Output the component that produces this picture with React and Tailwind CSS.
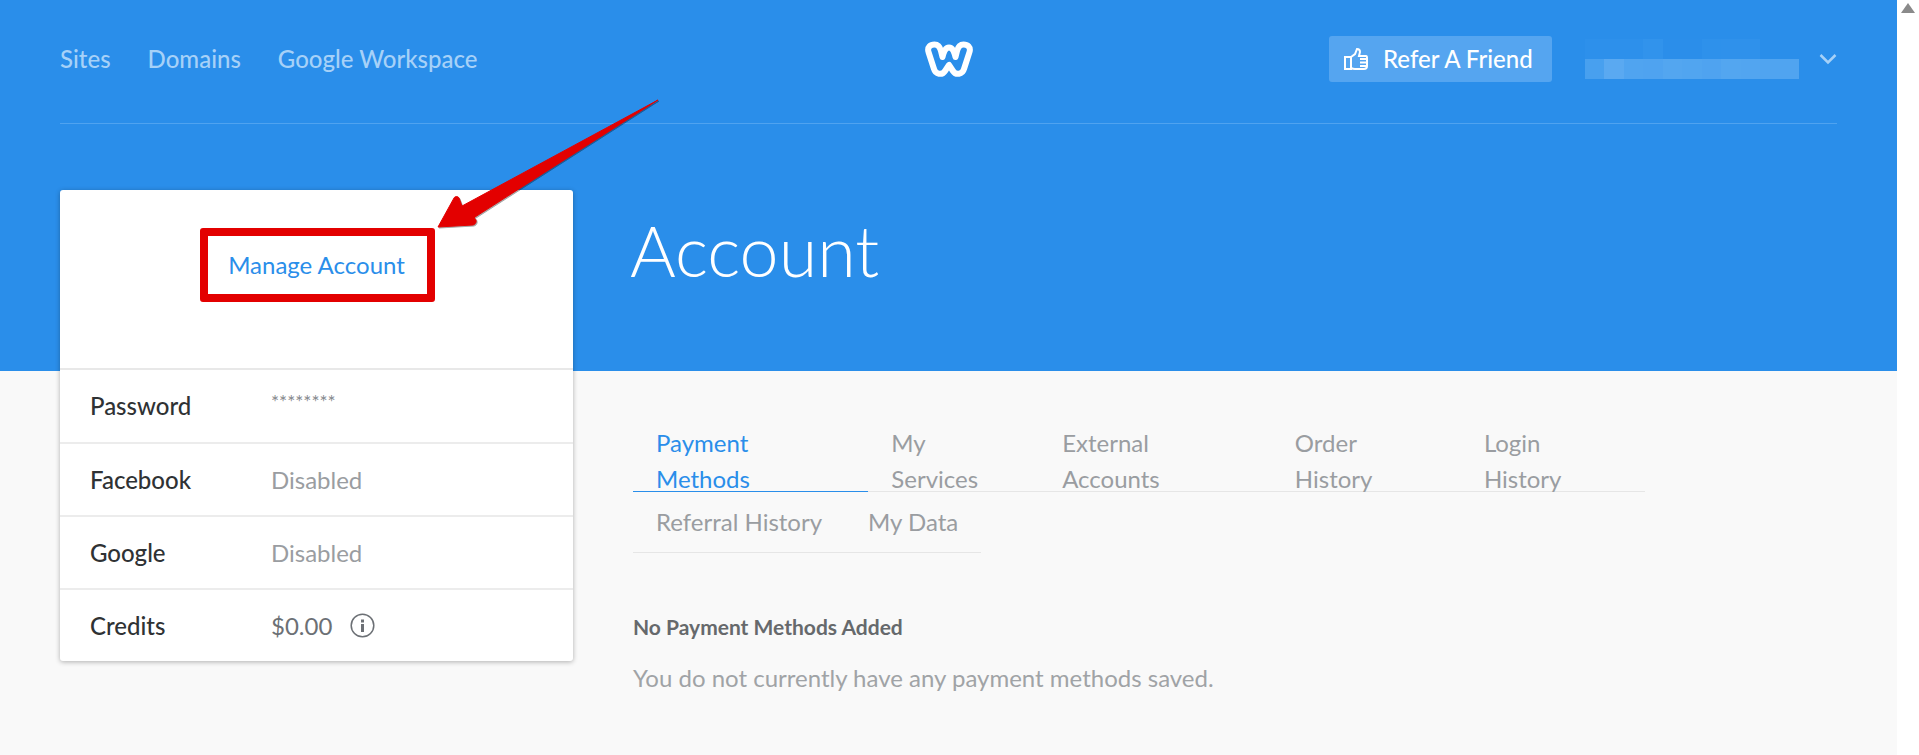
const tabsTop = [
  { label: 'Payment Methods', active: true },
  { label: 'My Services' },
  { label: 'External Accounts' },
  { label: 'Order History' },
  { label: 'Login History' },
];
const tabsBottom = [{ label: 'Referral History' }, { label: 'My Data' }];

const blocksTop = ['#2d90eb', '#2d90eb', '#2d90eb', '#3193ec', '#2b8eea', '#2b8eea', '#2e91eb', '#2f91eb', '#2f91eb', '#2a8eea', '#2a8eea'];
const blocksBottom = ['#48a0ef', '#5aa9f1', '#50a4f0', '#4fa3f0', '#53a6f0', '#51a5f0', '#4fa3f0', '#53a6f0', '#52a5f0', '#50a4f0', '#50a4f0'];

function Tab({ label, active }) {
  return (
    <a className={`px-[23px] h-[61px] flex items-center border-b-[1.5px] text-[24px] ${active ? 'text-[#2a8eea] border-[#2a8eea]' : 'text-[#9a9da1] border-[#e6e6e6]'}`}>
      {label}
    </a>
  );
}

function Row({ label, children, divided }) {
  return (
    <div className={`flex items-center pl-[30px] ${divided ? 'h-[73px] border-t-2 border-[#ececec]' : 'h-[72px]'}`}>
      <div className="w-[181px] text-[24px] font-medium text-[#2f3234]">{label}</div>
      <div className="flex items-center text-[24px] text-[#9a9da1]">{children}</div>
    </div>
  );
}

export default function App() {
  return (
    <div className="h-[755px] overflow-hidden flex font-['Lato',sans-serif] bg-white">
      <div className="relative flex-1 min-w-0 bg-[#f9f9f9]">
        <header className="h-[371px] bg-[#2a8eea] px-[60px]">
          <div className="relative h-[124px] pb-[5px] flex items-center justify-between border-b-[1.5px] border-[#4fa3f0]">
            <nav className="flex gap-[37px] text-[24px] font-medium text-[#a6d1f8]">
              <a>Sites</a>
              <a>Domains</a>
              <a>Google Workspace</a>
            </nav>
            <svg className="absolute left-[865px] top-[41px]" width="48" height="37" viewBox="0 0 48 37" fill="none">
              <path d="M3.500 11 C2 6 5.500 3.500 9.500 3.500 C13 3.500 15 6 16 10 L17.500 16 C19 10 20.500 6.500 24 6.500 C27.500 6.500 29 10 30.500 16 L32 10 C33 6 35 3.500 38.500 3.500 C42.500 3.500 46 6 44.500 11 L39 28 C37.500 33.500 31 34.500 28 30 L24 24 L20 30 C17 34.500 10.500 33.500 9 28 Z" stroke="#fff" strokeWidth="6" strokeLinejoin="round" />
            </svg>
            <div className="flex items-center">
              <a className="w-[223px] h-[46px] flex items-center pl-[15px] rounded-[3px] bg-[#55a5f0] text-white text-[24px] font-medium">
                <svg className="mr-[15px]" width="24" height="22" viewBox="0 0 24 22" fill="none" stroke="#fff" strokeWidth="2">
                  <path d="M1 9h6v12H1z" />
                  <path d="M7 9l4-3 2-5c2 0 3 1 3 3l-1 4h7c1 0 1 1 1 2v8c0 2-1 3-3 3H11c-2 0-4-1-4-1" />
                  <path d="M16 11h6M16 14.500h6M16 18h6" />
                </svg>
                Refer A Friend
              </a>
              <div className="ml-[33px] w-[214px] h-[40px] flex flex-col">
                <div className="flex h-[20px]">
                  {blocksTop.map((c, i) => <div key={i} className="flex-1" style={{ background: c }} />)}
                </div>
                <div className="flex h-[20px]">
                  {blocksBottom.map((c, i) => <div key={i} className="flex-1" style={{ background: c }} />)}
                </div>
              </div>
              <svg className="ml-[20px]" width="18" height="12" viewBox="0 0 18 12" fill="none" stroke="#a6d1f8" strokeWidth="2.500">
                <path d="M1.500 2l7.500 7.500L16.500 2" />
              </svg>
            </div>
          </div>
          <h1 className="ml-[570px] mt-[86px] text-[70px] font-light leading-[80px] text-white">Account</h1>
        </header>

        <div className="absolute left-[60px] top-[190px] w-[513px] h-[471px] bg-white rounded-[3px] shadow-[0_1px_5px_rgba(0,0,0,0.3)] overflow-hidden">
          <div className="h-[180px] pt-[57px] flex justify-center text-[24px] leading-[36px] text-[#2a8eea] border-b-2 border-[#e8e8e8]">
            Manage Account
          </div>
          <Row label="Password">
            <span className="text-[19px] text-[#85888c] -mt-[8px]">********</span>
          </Row>
          <Row label="Facebook" divided>Disabled</Row>
          <Row label="Google" divided>Disabled</Row>
          <Row label="Credits" divided>
            <span className="text-[#6c7075]">$0.00</span>
            <svg className="ml-[18px]" width="25" height="25" viewBox="0 0 25 25" fill="none">
              <circle cx="12.500" cy="12.500" r="11.300" stroke="#6c7075" strokeWidth="1.500" />
              <rect x="11" y="11" width="3" height="8" fill="#6c7075" />
              <rect x="11" y="6.500" width="3" height="3" fill="#6c7075" />
            </svg>
          </Row>
        </div>

        {/* annotation drawn over the page */}
        <div className="absolute left-[200px] top-[228px] w-[235px] h-[74px] border-[8px] border-[#e30000] rounded-[3px]" />
        <svg className="absolute left-[430px] top-[95px] drop-shadow-[1px_1px_0_rgba(0,0,0,0.35)]" width="235" height="140" viewBox="430 95 235 140">
          <path d="M658 100 L462 206 L459 198 C458 196 455 196 454 198 L438 227 L473 225 C477 224 477 219 474 218 L475 217 Z" fill="#e30000" stroke="#e30000" strokeWidth="1" strokeLinejoin="round" />
        </svg>

        <main className="absolute left-[633px] top-[431px] w-[1012px]">
          <div className="flex h-[61px] border-b-[1.5px] border-[#e6e6e6] w-full">
            {tabsTop.map(t => <Tab key={t.label} {...t} />)}
          </div>
          <div className="flex h-[61px] border-b-[1.5px] border-[#e6e6e6] w-fit">
            {tabsBottom.map(t => <Tab key={t.label} {...t} />)}
          </div>
          <h2 className="mt-[58px] text-[21px] font-bold text-[#66696c]">No Payment Methods Added</h2>
          <p className="mt-[17px] text-[24px] text-[#a0a3a6]">You do not currently have any payment methods saved.</p>
        </main>
      </div>
      <div className="w-[22px] shrink-0 bg-white pt-[3px] flex justify-center">
        <svg width="14" height="10" viewBox="0 0 14 10"><path d="M7 0L14 10H0z" fill="#8a8a8a" /></svg>
      </div>
    </div>
  );
}
